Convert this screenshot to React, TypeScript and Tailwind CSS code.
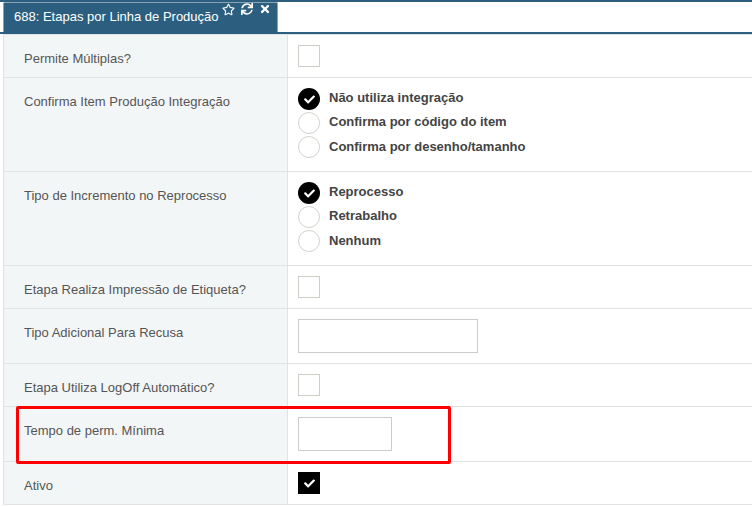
import React from "react";
import { FaRegStar, FaSync, FaTimes, FaCheck } from "react-icons/fa";

const font = "font-['Liberation_Sans',Arial,sans-serif]";

function Row({ label, h, children, labelClass = "pt-[15px]" }: { label: string; h: string; children?: React.ReactNode; labelClass?: string }) {
  return (
    <div className={`flex border-b border-[#dfe3e4] ${h}`}>
      <div className={`w-[284px] shrink-0 bg-[#f3f6f7] border-r border-[#dfe3e4] pl-[20px] text-[13px] leading-[18px] text-[#555] ${labelClass}`}>{label}</div>
      <div className="flex-1 bg-white pl-[10px]">{children}</div>
    </div>
  );
}

function Box() {
  return <div className="w-[22px] h-[22px] border border-[#d0ccc6] bg-white" />;
}

function Radio({ label, on, textClass = "mt-[1px]" }: { label: string; on?: boolean; textClass?: string }) {
  return (
    <div className="flex items-start h-[24px]">
      <div className={`w-[22px] h-[22px] rounded-full flex items-center justify-center ${on ? "bg-black" : "bg-white border border-[#d5d2cc]"}`}>
        {on && <FaCheck size={11} color="#fff" />}
      </div>
      <span className={`ml-[9px] text-[13px] leading-[18px] font-bold text-[#444] ${textClass}`}>{label}</span>
    </div>
  );
}

export default function App() {
  return (
    <div className={`${font} w-[752px] h-[506px] bg-white overflow-hidden`}>
      <div className="h-[34px] flex items-end border-t-2 border-[#2c5f7f] border-b-2 border-b-[#2c5f7f]">
        <div className="ml-[3px] w-[275px] h-[30px] bg-[#2c5f7f] flex text-white rounded-t-[2px] border-x border-t border-[#8aa3b3]">
          <span className="ml-[10px] mt-[5px] text-[13px] leading-[18px] whitespace-nowrap">688: Etapas por Linha de Produção</span>
          <div className="flex ml-[3px] mt-0 gap-[6px]">
            <FaRegStar size={13} />
            <FaSync size={12} />
            <FaTimes size={12} />
          </div>
        </div>
      </div>
      <div className="ml-[3px] border-l border-t border-[#dfe3e4] relative">
        <Row label="Permite Múltiplas?" h="h-[43px]" labelClass="pt-[15px]"><div className="pt-[10px]"><Box /></div></Row>
        <Row label="Confirma Item Produção Integração" h="h-[94px]">
          <div className="pt-[10px]">
            <Radio on label="Não utiliza integração" />
            <Radio label="Confirma por código do item" />
            <Radio label="Confirma por desenho/tamanho" textClass="mt-[2px]" />
          </div>
        </Row>
        <Row label="Tipo de Incremento no Reprocesso" h="h-[94px]">
          <div className="pt-[10px]">
            <Radio on label="Reprocesso" />
            <Radio label="Retrabalho" />
            <Radio label="Nenhum" textClass="mt-[2px]" />
          </div>
        </Row>
        <Row label="Etapa Realiza Impressão de Etiqueta?" h="h-[43px]"><div className="pt-[10px]"><Box /></div></Row>
        <Row label="Tipo Adicional Para Recusa" h="h-[55px]" labelClass="pt-[15px]">
          <div className="pt-[10px]"><div className="w-[180px] h-[34px] border border-[#ccc]" /></div>
        </Row>
        <Row label="Etapa Utiliza LogOff Automático?" h="h-[43px]"><div className="pt-[10px]"><Box /></div></Row>
        <Row label="Tempo de perm. Mínima" h="h-[55px]" labelClass="pt-[15px]">
          <div className="pt-[10px]"><div className="w-[94px] h-[34px] border border-[#ccc]" /></div>
        </Row>
        <Row label="Ativo" h="h-[43px]">
          <div className="pt-[10px]">
            <div className="w-[22px] h-[22px] bg-black flex items-center justify-center"><FaCheck size={11} color="#fff" /></div>
          </div>
        </Row>
      </div>
      <div className="absolute left-[16px] top-[406px] w-[435px] h-[58px] border-[3px] border-[#ff0000] rounded-[2px]" />
    </div>
  );
}
